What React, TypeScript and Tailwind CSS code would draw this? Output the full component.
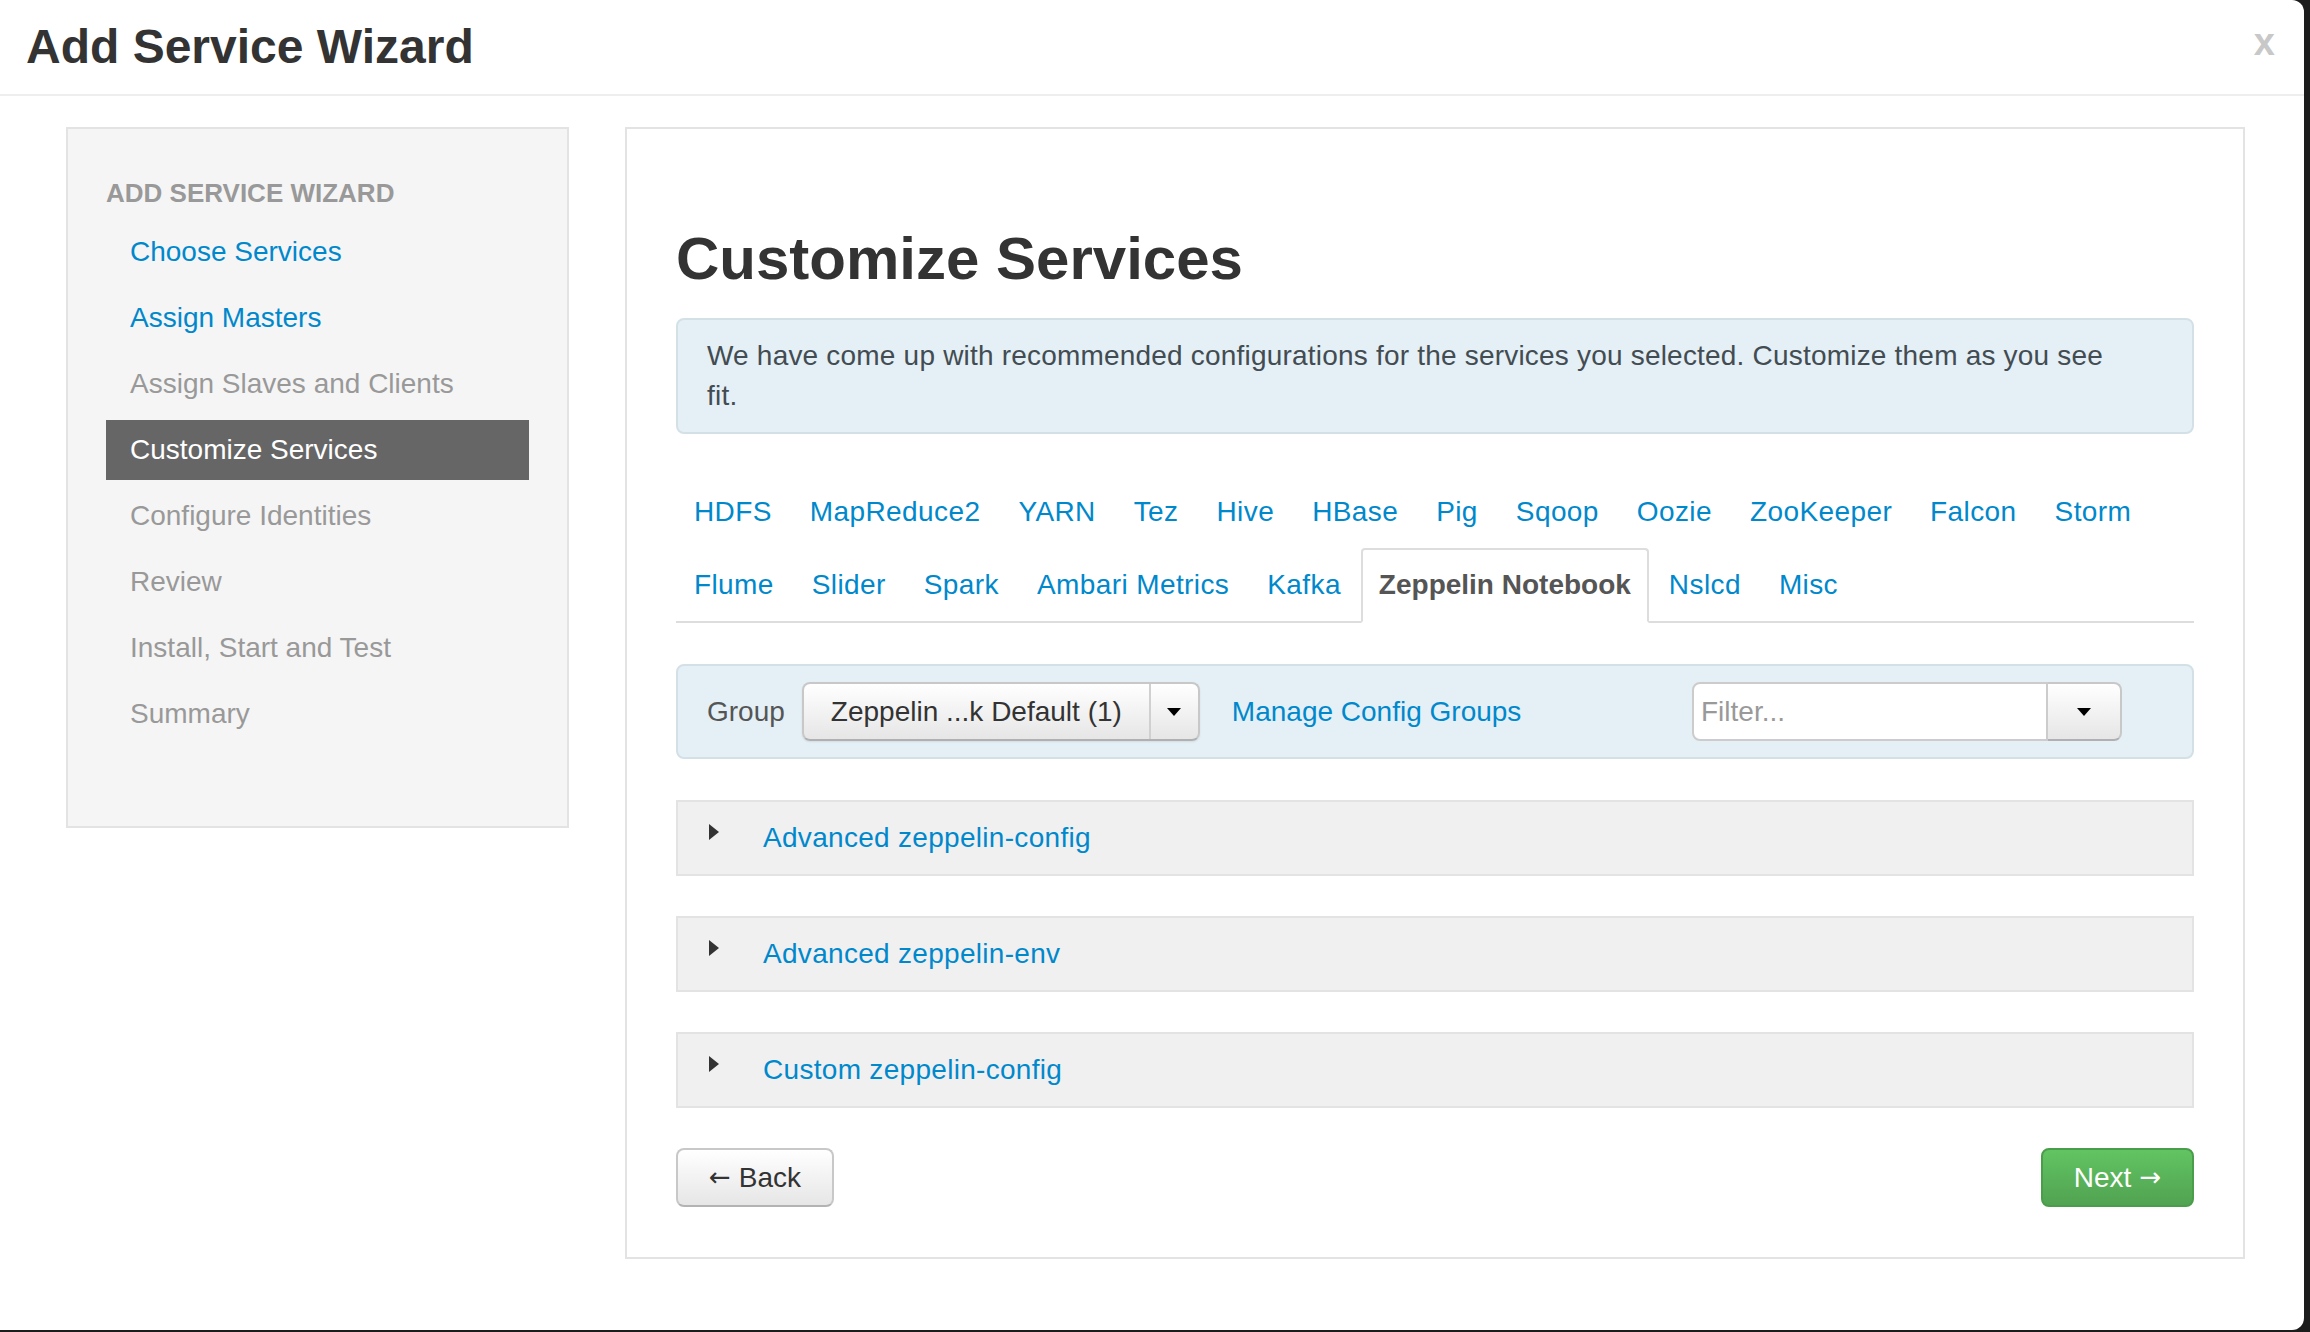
import React from 'react';

const steps = [
  { label: 'Choose Services', state: 'done' },
  { label: 'Assign Masters', state: 'done' },
  { label: 'Assign Slaves and Clients', state: 'todo' },
  { label: 'Customize Services', state: 'active' },
  { label: 'Configure Identities', state: 'todo' },
  { label: 'Review', state: 'todo' },
  { label: 'Install, Start and Test', state: 'todo' },
  { label: 'Summary', state: 'todo' },
];

const services = [
  'HDFS', 'MapReduce2', 'YARN', 'Tez', 'Hive', 'HBase', 'Pig', 'Sqoop', 'Oozie', 'ZooKeeper',
  'Falcon', 'Storm', 'Flume', 'Slider', 'Spark', 'Ambari Metrics', 'Kafka', 'Zeppelin Notebook',
  'Nslcd', 'Misc',
];

const sections = ['Advanced zeppelin-config', 'Advanced zeppelin-env', 'Custom zeppelin-config'];

function Caret() {
  return <span className="w-0 h-0 border-x-[7px] border-x-transparent border-t-[8px] border-t-black" />;
}

export default function App() {
  return (
    <div className="w-[2310px] h-[1332px] bg-[#1c1c1c] overflow-hidden [font-family:'Liberation_Sans',Arial,sans-serif]">
      <div className="w-[2304px] h-[1330px] bg-white rounded-r-[12px] flex flex-col">
        {/* Header */}
        <div className="h-[96px] shrink-0 border-b-2 border-[#eee] flex items-center justify-between pl-[26px] pr-[29px]">
          <h3 className="text-[48px] leading-none font-bold text-[#333]">Add Service Wizard</h3>
          <button className="text-[38px] leading-none font-bold text-[#c8c8c8] mb-[10px]">x</button>
        </div>

        <div className="flex items-start gap-[56px] pl-[66px] pt-[31px]">
          {/* Steps sidebar */}
          <div className="w-[503px] shrink-0 border-2 border-[#e3e3e3] bg-[#f5f5f5] px-[38px] pt-[44px] pb-[82px]">
            <div className="text-[26px] leading-[40px] font-bold text-[#999] uppercase mb-[9px]">Add Service Wizard</div>
            <ul className="flex flex-col gap-[6px]">
              {steps.map(s => (
                <li
                  key={s.label}
                  className={
                    'h-[60px] leading-[60px] pl-[24px] text-[28px] ' +
                    (s.state === 'active'
                      ? 'bg-[#666] text-white'
                      : s.state === 'done'
                      ? 'text-[#0088cc]'
                      : 'text-[#999]')
                  }
                >
                  {s.label}
                </li>
              ))}
            </ul>
          </div>

          {/* Main panel */}
          <div className="w-[1620px] shrink-0 border-2 border-[#e3e3e3] bg-white px-[49px] pt-[90px] pb-[50px]">
            <h1 className="text-[60px] leading-[80px] font-bold text-[#333] mb-[19px]">Customize Services</h1>

            <div className="border-2 border-[#d3e1e7] bg-[#e4f0f5] rounded-[8px] pl-[29px] pr-[70px] py-[16px] text-[28px] leading-[40px] text-[#434c52] tracking-[0.2px]">
              We have come up with recommended configurations for the services you selected. Customize them as you see
              <br />
              fit.
            </div>

            {/* Service tabs */}
            <ul className="mt-[41px] flex flex-wrap border-b-2 border-[#ddd]">
              {services.map(name => {
                const active = name === 'Zeppelin Notebook';
                return (
                  <li key={name} className="-mb-[2px] mr-[2px]">
                    <a
                      className={
                        'block border-2 px-[16px] pt-[15px] pb-[16px] leading-[40px] text-[28px] rounded-t-[4px] ' +
                        (active
                          ? 'border-[#ddd] border-b-white bg-white font-bold text-[#555]'
                          : 'border-transparent text-[#0088cc] tracking-[0.4px]')
                      }
                    >
                      {name}
                    </a>
                  </li>
                );
              })}
            </ul>

            {/* Config group bar */}
            <div className="mt-[41px] h-[95px] border-2 border-[#d3e0e6] bg-[#e4f0f5] rounded-[8px] flex items-center pl-[29px] pr-[70px]">
              <span className="text-[28px] text-[#555] mr-[17px]">Group</span>
              <div className="flex h-[59px] rounded-[8px] border-2 border-[#c8c8c8] border-b-[#b0b0b0] bg-linear-to-b from-white to-[#e6e6e6] shadow-[0_1px_2px_rgba(0,0,0,0.08)]">
                <span className="px-[27px] flex items-center text-[28px] text-[#333] border-r-2 border-[#d0d0d0]">
                  Zeppelin ...k Default (1)
                </span>
                <span className="w-[47px] flex items-center justify-center">
                  <Caret />
                </span>
              </div>
              <a className="ml-[32px] text-[28px] text-[#0088cc]">Manage Config Groups</a>
              <div className="ml-auto flex h-[59px] w-[430px]">
                <input
                  placeholder="Filter..."
                  className="w-[356px] h-full border-2 border-[#ccc] rounded-l-[8px] bg-white pl-[7px] text-[28px] text-[#333] placeholder:text-[#999] outline-none"
                />
                <span className="flex-1 flex items-center justify-center border-2 border-l-0 border-[#c8c8c8] border-b-[#b0b0b0] rounded-r-[8px] bg-linear-to-b from-white to-[#e6e6e6]">
                  <Caret />
                </span>
              </div>
            </div>

            {/* Config sections */}
            <div className="mt-[41px] flex flex-col gap-[40px]">
              {sections.map(title => (
                <div key={title} className="h-[76px] border-2 border-[#e3e3e3] bg-[#f0f0f0] flex items-center pl-[31px]">
                  <span className="w-0 h-0 border-y-[8px] border-y-transparent border-l-[10px] border-l-[#333] mb-[12px]" />
                  <a className="ml-[44px] text-[28px] text-[#0088cc] tracking-[0.3px]">{title}</a>
                </div>
              ))}
            </div>

            {/* Footer buttons */}
            <div className="mt-[40px] flex justify-between">
              <button className="h-[59px] w-[158px] flex items-center justify-center gap-[8px] rounded-[8px] border-2 border-[#c8c8c8] border-b-[#b3b3b3] bg-linear-to-b from-white to-[#e6e6e6] text-[28px] text-[#333]">
                <span className="[font-family:'DejaVu_Sans',sans-serif] text-[26px]">←</span>
                <span>Back</span>
              </button>
              <button className="h-[59px] w-[153px] flex items-center justify-center gap-[8px] rounded-[8px] border-2 border-[#4a9d4a] bg-linear-to-b from-[#62c462] to-[#51a351] text-[28px] text-white">
                <span>Next</span>
                <span className="[font-family:'DejaVu_Sans',sans-serif] text-[26px]">→</span>
              </button>
            </div>
          </div>
        </div>
      </div>
    </div>
  );
}
